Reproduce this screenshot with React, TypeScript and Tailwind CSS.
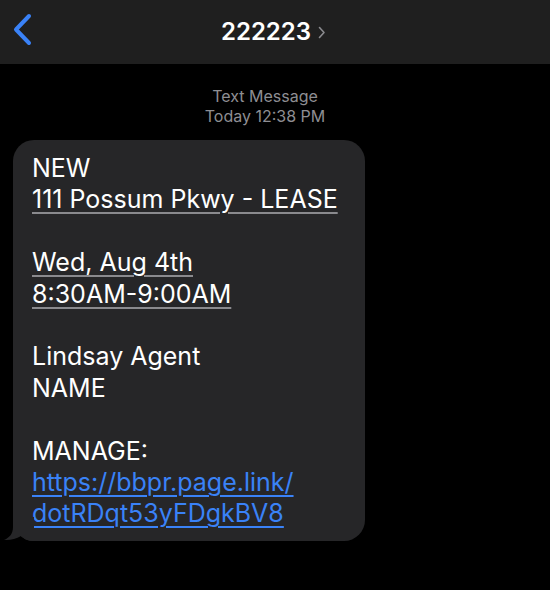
export default function App() {
  return (
    <div className="w-[550px] h-[590px] bg-black overflow-hidden" style={{ fontFamily: "Inter, 'Noto Sans', sans-serif" }}>
      <header className="h-16 bg-[#1f1f1f] relative flex items-center justify-center">
        <svg className="absolute left-[12px] top-[13px]" width="22" height="36" viewBox="0 0 22 36" fill="none">
          <path d="M17 3 L4 16.5 L17 30" stroke="#3a82f7" strokeWidth="4" strokeLinecap="round" strokeLinejoin="round" />
        </svg>
        <div className="flex items-center gap-[7px] ml-[-3px]">
          <span className="text-white text-[24px] font-semibold">222223</span>
          <svg width="8" height="13" viewBox="0 0 8 13" fill="none" className="mt-[1px]">
            <path d="M1.5 1.5 L6 6.5 L1.5 11.5" stroke="#8a8a8e" strokeWidth="1.6" strokeLinecap="round" strokeLinejoin="round" />
          </svg>
        </div>
      </header>

      <div className="pt-[22px] text-center text-[#8e8e93] text-[16px] leading-[20px] pr-[20px]">
        <p>Text Message</p>
        <p>Today 12:38 PM</p>
      </div>

      <div className="relative mt-[14px] ml-[13px] w-[352px]">
        <div className="bg-[#262628] rounded-[21px] pl-[19px] pr-[12px] pt-[13px] pb-[11px] text-white text-[25px] leading-[31.4px]">
          <p>NEW</p>
          <p className="underline decoration-[#8a8a8e] underline-offset-[4px] decoration-[1.5px]">111 Possum Pkwy - LEASE</p>
          <p>&nbsp;</p>
          <p className="underline decoration-[#8a8a8e] underline-offset-[4px] decoration-[1.5px]">Wed, Aug 4th</p>
          <p className="underline decoration-[#8a8a8e] underline-offset-[4px] decoration-[1.5px]">8:30AM-9:00AM</p>
          <p>&nbsp;</p>
          <p>Lindsay Agent</p>
          <p>NAME</p>
          <p>&nbsp;</p>
          <p>MANAGE:</p>
          <p className="text-[#3a82f7] underline underline-offset-[4px] decoration-[1.5px]">https://bbpr.page.link/</p>
          <p className="text-[#3a82f7] underline underline-offset-[4px] decoration-[1.5px]">dotRDqt53yFDgkBV8</p>
        </div>
        <svg className="absolute left-[-9px] bottom-0" width="30" height="24" viewBox="0 0 30 24" fill="none">
          <path d="M9 0 L9 10 C9 17 5 21 0 23 C6 23.5 12 22 17 19 C20 22 24 24 30 24 L30 0 Z" fill="#262628" />
        </svg>
      </div>
    </div>
  );
}
